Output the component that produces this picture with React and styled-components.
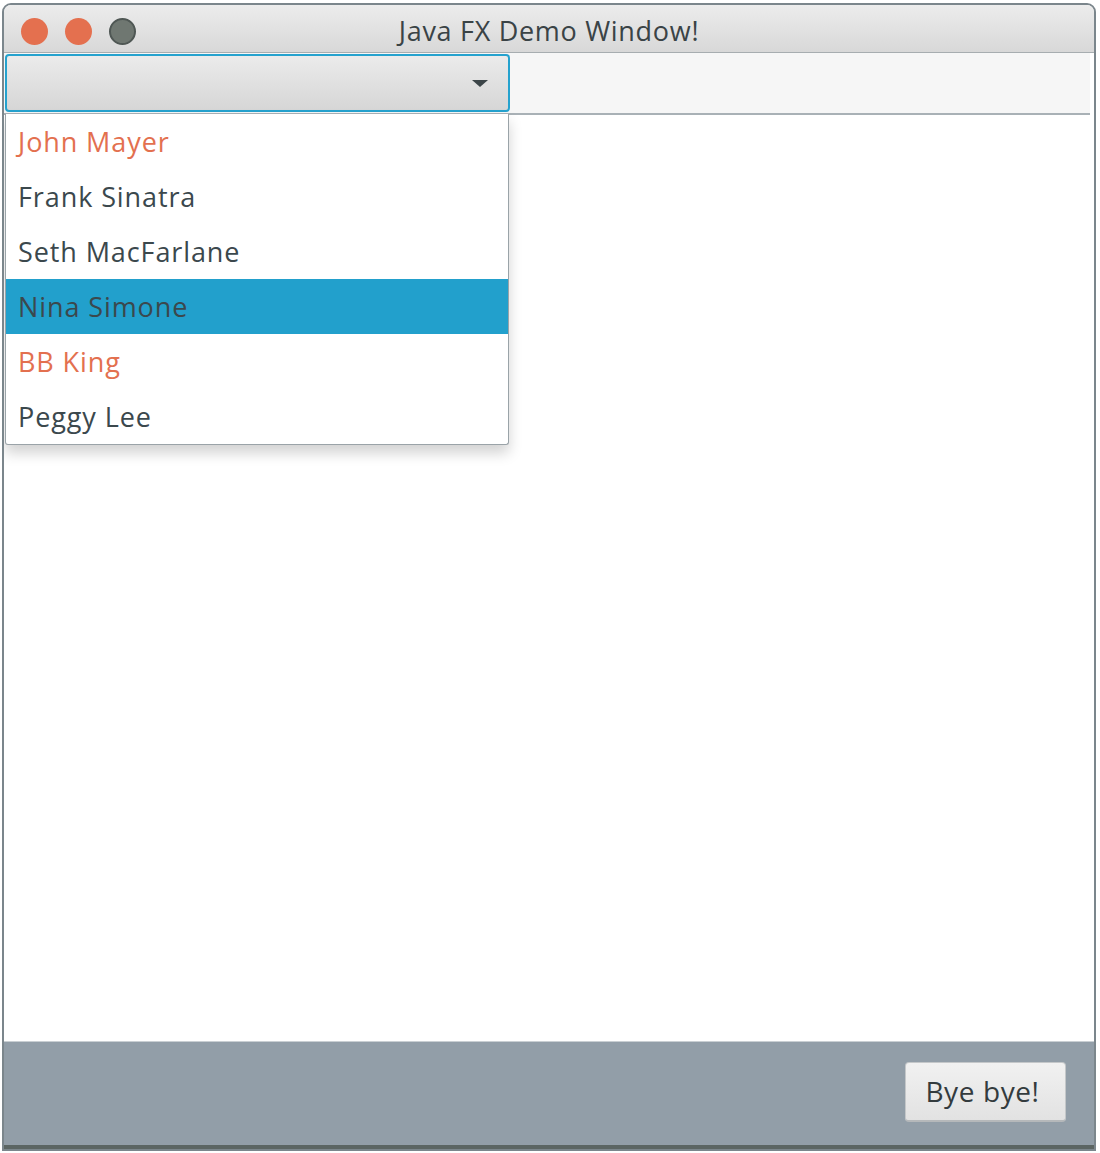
import React from "react";
import styled, { createGlobalStyle } from "styled-components";

const Global = createGlobalStyle`
  html, body { margin: 0; padding: 0; background: #ffffff; }
  body { font-family: "Open Sans", "Liberation Sans", sans-serif; }
  * { box-sizing: border-box; }
`;

const Window = styled.div`
  margin: 3px 4px 2px 2px;
  height: 1148px;
  border: 2px solid #7b868c;
  border-radius: 9px 9px 0 0;
  display: flex;
  flex-direction: column;
  background: #fff;
  overflow: hidden;
`;

const TitleBar = styled.div`
  height: 48px;
  flex: none;
  display: flex;
  align-items: center;
  position: relative;
  padding-top: 5px;
  background: linear-gradient(#ececec, #d8d8d8);
  border-bottom: 1px solid #a7adb0;
`;

const Lights = styled.div`
  display: flex;
  gap: 17px;
  padding-left: 17px;
`;

const Light = styled.span`
  width: 27px;
  height: 27px;
  border-radius: 50%;
  background: ${p => p.$color};
  border: ${p => (p.$ring ? "2px solid #4f5754" : "none")};
`;

const Title = styled.div`
  position: absolute;
  left: 0;
  right: 0;
  top: 6px;
  text-align: center;
  font-size: 27px;
  letter-spacing: 0.7px;
  line-height: 40px;
  color: #3a4346;
  pointer-events: none;
`;

const Toolbar = styled.div`
  height: 62px;
  flex: none;
  display: flex;
  align-items: center;
  background: #f6f6f6;
  border-bottom: 2px solid #a9b1b6;
  margin-right: 4px;
`;

const Combo = styled.div`
  width: 505px;
  height: 58px;
  margin-left: 1px;
  border: 2px solid #25a2ce;
  border-radius: 4px;
  background: linear-gradient(#ebebeb, #d6d6d6);
  display: flex;
  align-items: center;
  justify-content: flex-end;
  padding-right: 20px;
`;

const Arrow = styled.span`
  width: 0;
  height: 0;
  border-left: 8px solid transparent;
  border-right: 8px solid transparent;
  border-top: 7px solid #3c4548;
`;

const Content = styled.div`
  flex: 1;
  position: relative;
  background: #fff;
`;

const Popup = styled.ul`
  position: absolute;
  top: -1px;
  left: 1px;
  width: 504px;
  margin: 0;
  padding: 0;
  list-style: none;
  background: #fff;
  border: 1px solid #9aa3a8;
  border-top: none;
  border-radius: 0 0 3px 3px;
  box-shadow: 0 8px 14px rgba(0, 0, 0, 0.18);
`;

const Item = styled.li`
  height: 55px;
  display: flex;
  align-items: center;
  padding-left: 12px;
  font-size: 27px;
  font-weight: 500;
  letter-spacing: 0.9px;
  color: ${p => (p.$accent ? "#e3704f" : "#3b484d")};
  background: ${p => (p.$selected ? "#22a0cc" : "transparent")};
`;

const BottomBar = styled.div`
  height: 108px;
  flex: none;
  background: #929ea8;
  border-top: 1px solid #c9cfd3;
  border-bottom: 4px solid #5b6563;
  display: flex;
  align-items: center;
  justify-content: flex-end;
  padding-right: 28px;
`;

const Button = styled.button`
  width: 161px;
  height: 60px;
  margin-top: -4px;
  padding: 0 6px 0 0;
  border: 1px solid #c4c7c9;
  border-bottom: 2px solid #b5b8ba;
  border-radius: 4px;
  background: linear-gradient(#f1f1f1, #e2e2e2);
  font-family: "Open Sans", "Liberation Sans", sans-serif;
  font-size: 28px;
  font-weight: 500;
  letter-spacing: 0.6px;
  color: #333b3e;
`;

const items = [
  { name: "John Mayer", accent: true },
  { name: "Frank Sinatra" },
  { name: "Seth MacFarlane" },
  { name: "Nina Simone", selected: true },
  { name: "BB King", accent: true },
  { name: "Peggy Lee" },
];

export default function App() {
  return (
    <>
      <Global />
      <Window>
        <TitleBar>
          <Lights>
            <Light $color="#e4704f" />
            <Light $color="#e4704f" />
            <Light $color="#6f7771" $ring />
          </Lights>
          <Title>Java FX Demo Window!</Title>
        </TitleBar>
        <Toolbar>
          <Combo>
            <Arrow />
          </Combo>
        </Toolbar>
        <Content>
          <Popup>
            {items.map(it => (
              <Item key={it.name} $accent={it.accent} $selected={it.selected}>
                {it.name}
              </Item>
            ))}
          </Popup>
        </Content>
        <BottomBar>
          <Button>Bye bye!</Button>
        </BottomBar>
      </Window>
    </>
  );
}
